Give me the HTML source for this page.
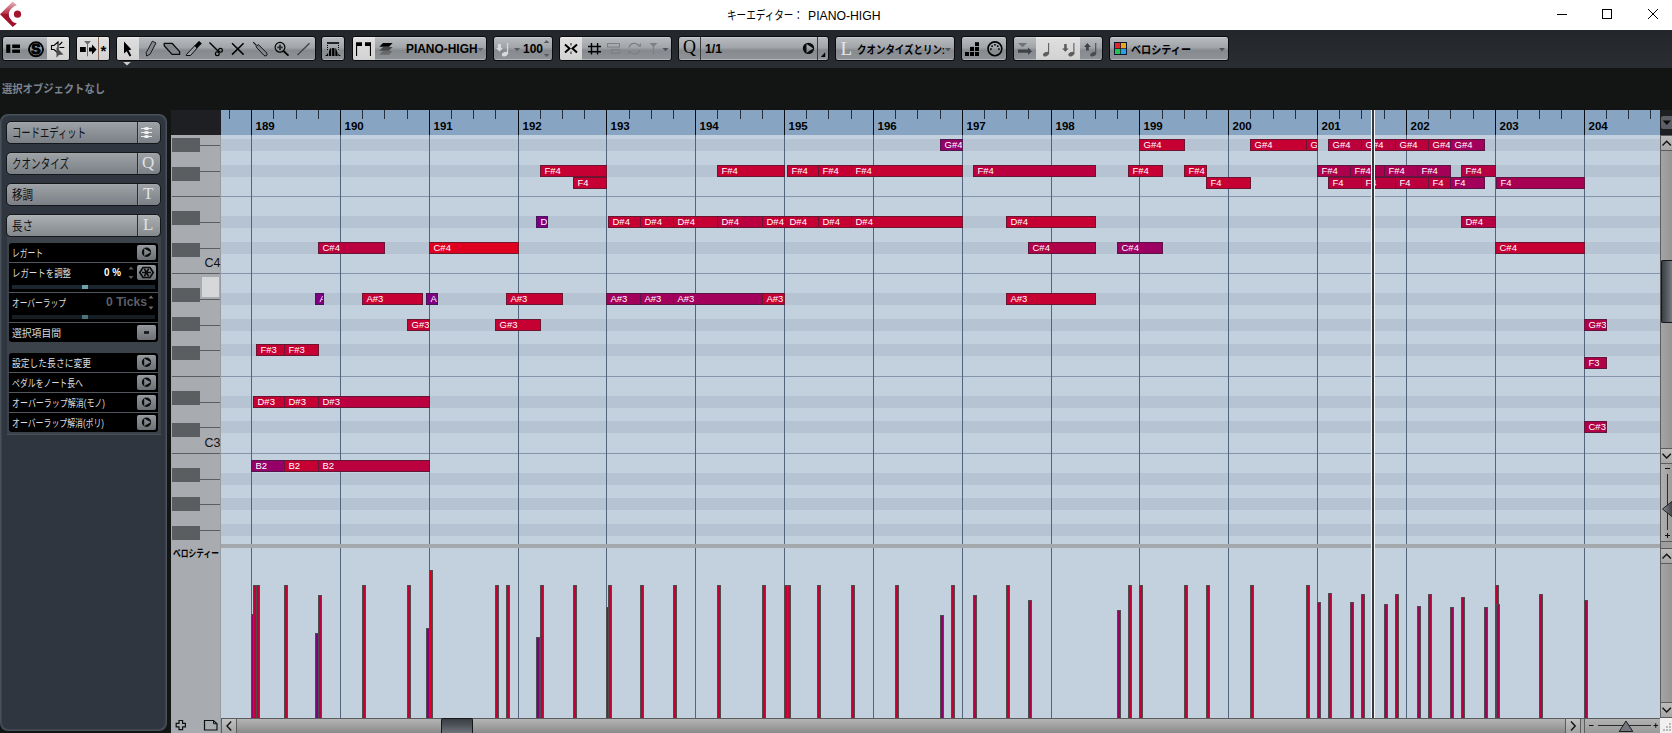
<!DOCTYPE html>
<html lang="ja"><head><meta charset="utf-8"><title>キーエディター： PIANO-HIGH</title>
<style>
html,body{margin:0;padding:0;background:#131514;}
body{width:1672px;height:733px;position:relative;overflow:hidden;-webkit-font-smoothing:antialiased;font-family:"Liberation Sans","Noto Sans CJK JP",sans-serif;font-size:11px;color:#000;}
div{position:absolute;box-sizing:border-box;}
svg{position:absolute;overflow:visible;}
.t{white-space:nowrap;}
.fit{display:inline-block;transform-origin:0 50%;white-space:nowrap;}
.g{border:1px solid #0a0b0c;border-radius:3px;top:36px;height:25px;overflow:hidden;
 background:linear-gradient(to bottom,#c8cbce 0,#c8cbce 1px,#b7babd 1px,#a1a5a9 10.5px,#868a8e 13.5px,#8f9397 22px,#b2b5b8 22px,#b2b5b8 23px);}
.a{top:0;height:23px;background:linear-gradient(to bottom,#f0f0f0 0,#dedede 2px,#d2d2d2 100%);}
.dv{top:0;width:1px;height:23px;background:#3a3d40;}
.n{height:12px;border:1px solid #6e1630;overflow:hidden;color:#fff;font-size:9.5px;line-height:10px;white-space:nowrap;padding:0 0 0 3.5px;}
.v{width:4px;border:1px solid #4c4c4c;border-bottom:none;}
.bl{top:135px;width:1px;height:583px;background:#53657d;}
.hl{left:221px;width:1439px;height:1px;background:#8596aa;}
.pb{left:6px;width:155px;height:23px;border:1px solid #15181b;border-radius:5px;overflow:hidden;
 background:linear-gradient(to bottom,#a6aaad 0,#9da1a5 1px,#7a8086 100%);}
.pb .d{left:130px;top:0;width:1px;height:21px;background:#2a2e32;}
.pb .d2{left:131px;top:0;width:1px;height:21px;background:#a0a4a8;opacity:.5;}
.pt{left:4.5px;top:0;height:21px;line-height:21px;font-size:13px;color:#101214;}
.row{left:0;width:149px;height:20px;border-top:1px solid #50565c;}
.rt{left:3px;top:1px;height:19px;line-height:19px;font-size:10.5px;color:#dcdcdc;}
.sb{left:128px;top:2px;width:19px;height:15px;border-radius:2px;background:linear-gradient(to bottom,#a0a4a7 0,#92969a 1px,#6c7074 100%);}
.bk{left:172px;width:28px;height:14px;background:#5a5e61;}
.kl{left:200px;width:21px;height:1px;background:#5b5e60;}
.kf{left:172px;width:49px;height:1px;background:#5b5e60;}
</style></head><body>

<div style="left:0px;top:0px;width:1672px;height:30px;background:#fff;"></div>
<svg style="left:0;top:0" width="24" height="30" viewBox="0 0 24 30">
<defs><linearGradient id="lg" x1="0" y1="0" x2="0" y2="1"><stop offset="0" stop-color="#eab8c0"/><stop offset=".48" stop-color="#b42c46"/><stop offset=".5" stop-color="#a4142c"/><stop offset="1" stop-color="#9e1028"/></linearGradient></defs>
<path d="M0 14.300L12.700 1.600L16.800 5.300L14.200 6.300Q8.600 10 8.800 14.500Q8.800 18.400 13.800 22.600L16.800 23.500L12.700 27Z" fill="url(#lg)"/>
<circle cx="17.500" cy="14.200" r="3.600" fill="#a4142c"/></svg>
<div class="t" style="left:727px;top:7px;height:18px;line-height:18px;font-size:12.5px;color:#000;"><span class="fit" id="ti1" style="transform:scaleX(0.7666)">キーエディター：</span></div>
<div class="t" style="left:808px;top:7px;height:18px;line-height:18px;font-size:12.5px;color:#000;"><span class="fit" id="ti2" style="transform:scaleX(0.9756)">PIANO-HIGH</span></div>
<svg style="left:1550px;top:0" width="122" height="30" viewBox="0 0 122 30" fill="none" stroke="#000" stroke-width="1">
<path d="M7 14.5h10"/><rect x="52.5" y="9.5" width="9" height="9"/><path d="M98 9l10 10M108 9l-10 10"/></svg>
<div style="left:0px;top:30px;width:1672px;height:38px;background:linear-gradient(to bottom,#23272b,#2a2d32);"></div>
<div style="left:0px;top:68px;width:1672px;height:42px;background:#131514;"></div>
<div class="g" style="left:2px;width:68px"><div class="a" style="left:44px;width:22px"></div><svg style="left:0px;top:0px" width="66" height="23" viewBox="0 0 66 23" >
<rect x="3.2" y="7.5" width="4.1" height="8.4" fill="#000"/><rect x="9.2" y="7.5" width="7.8" height="3.6" fill="#000"/><rect x="9.2" y="12.6" width="7.8" height="3.3" fill="#000"/>
<circle cx="33" cy="12.300" r="7" fill="none" stroke="#000" stroke-width="1.900"/>
<text x="33" y="17.300" text-anchor="middle" font-family="Liberation Sans,sans-serif" font-weight="bold" font-size="14" fill="#000" stroke="#000" stroke-width="1.1">S</text>
<path d="M48.500 8.500h2.500l4-3.500v11l-4-3.500h-2.500z" fill="none" stroke="#000" stroke-width="1.100"/>
<path d="M56.300 8l3-3.200M56.500 10.500h4.800" stroke="#000" stroke-width="1.100" fill="none"/>
<path d="M53.500 10.500v10.300l2.300-2.800 4.700-.5z" fill="#4c4c4c"/>
</svg></div>
<div class="g" style="left:76px;width:34px"><div class="a" style="left:0px;width:32px"></div><div class="dv" style="left:21px;background:#8a6a5c"></div><svg style="left:0px;top:0px" width="32" height="23" viewBox="0 0 32 23" >
<path d="M7 4h7l-3 3.200v12h-1v-12z" fill="#6c6c6c"/>
<rect x="3" y="10" width="5.8" height="5" fill="#000"/><path d="M12 10.6h3v-3l4.6 5-4.6 5v-3h-3z" fill="#000"/>
<text x="26.500" y="19" text-anchor="middle" font-family="Liberation Sans,sans-serif" font-weight="bold" font-size="15" fill="#000">*</text>
</svg></div>
<div class="g" style="left:116px;width:200px"><div class="a" style="left:0px;width:22px"></div><svg style="left:0px;top:0px" width="198" height="23" viewBox="0 0 198 23" >
<path d="M7 4.500L7 16.500L9.700 14.200L12.600 19.400L14.300 18.500L11.600 13.300L14.400 12.600Z" fill="#000"/>
<path d="M35.400 4.200L39 6L33 17.300L29.600 19L29.200 15.600Z" fill="#84888c" stroke="#1a1a1a" stroke-width="1" stroke-linejoin="round"/>
<path d="M47.200 6.300L55.100 6.300L62.600 14.600L62.600 17.400L55.100 17.400L47.200 8.800Z" fill="#84888c" stroke="#0c0c0c" stroke-width="1.300" stroke-linejoin="round"/>
<path d="M77.800 8.600L69.200 17.800L69.200 18.500L73.500 18.500L80.200 11Z" fill="#9a9ea2" stroke="#0c0c0c" stroke-width="1" stroke-linejoin="round"/><path d="M82 4.200L84.500 6.600L80.200 11L77.800 8.600Z" fill="#000" stroke="#000" stroke-width=".6"/>
<path d="M92.500 5.500l9.500 9.500" stroke="#000" stroke-width="1.400" fill="none"/><circle cx="103.500" cy="13.300" r="1.900" fill="none" stroke="#000" stroke-width="1.200"/><circle cx="100.300" cy="16.800" r="1.900" fill="none" stroke="#000" stroke-width="1.200"/>
<path d="M115 6.200l11.600 11.400M126.600 6.200l-11.600 11.400" stroke="#000" stroke-width="1.500" fill="none"/>
<path d="M136.200 5.200l3.300 3.300" stroke="#111" stroke-width="1.100"/><path d="M139 9.800l2.300-2.300 8.400 8.400q1 2.400-.4 2.900q-1.500.4-2.500-.6z" fill="#84888c" stroke="#111" stroke-width="1" stroke-linejoin="round"/>
<circle cx="163" cy="10.300" r="4.900" fill="none" stroke="#000" stroke-width="1.200"/><path d="M166.500 14l5 4.600" stroke="#000" stroke-width="1.800"/><path d="M160.300 10.300h5.400M163 7.600v5.400" stroke="#2c2c2c" stroke-width="1.800"/>
<path d="M180.500 18l12-11.700" stroke="#404040" stroke-width="1.200"/>
</svg></div>
<svg style="left:122px;top:62px" width="10" height="4" viewBox="0 0 10 4" ><path d="M1.2 0h7.6l-3.8 3.6z" fill="#c9ccd0"/></svg>
<div class="g" style="left:321px;width:24px"><svg style="left:0px;top:0px" width="22" height="23" viewBox="0 0 22 23" >
<rect x="5" y="5.200" width="12.100" height="1.600" fill="#000"/>
<g fill="#000"><rect x="5" y="8" width="1" height="1"/><rect x="5" y="10" width="1" height="1"/><rect x="5" y="12" width="1" height="1"/><rect x="16" y="8" width="1" height="1"/><rect x="16" y="10" width="1" height="1"/><rect x="16" y="12" width="1" height="1"/></g>
<path d="M3 18.900Q6.500 17 8 11.600Q9.500 10.900 11 10.900Q12.500 10.900 14 11.600Q15.500 17 18.900 18.900Z" fill="#000"/>
<path d="M6.500 11v8M9.600 11v8M12.900 11v8M16 11v8" stroke="#979b9f" stroke-width=".8"/>
</svg></div>
<div class="g" style="left:352px;width:135px"><div class="a" style="left:0px;width:22px"></div><svg style="left:0px;top:0px" width="133" height="23" viewBox="0 0 133 23" >
<path d="M3 18.900v-13.700h6v3.700h-4.900v10zM12 5.200h6v13.700h-1.100v-10h-4.900z" fill="#000"/>
<path d="M30 6h9.600l-3.600 3.700h-9.600z" fill="#000"/><path d="M30 10.100h9.600l-3.600 3.600h-9.600z" fill="#474747"/><path d="M30 14.100h9.600l-3.600 3.600h-9.600z" fill="#686868"/>
<path d="M124.5 11h6l-3 3.2z" fill="#63676b"/>
</svg><div class="t" style="left:52.5px;top:1px;height:23px;line-height:23px;font-size:12px;font-weight:bold;color:#000"><span class="fit" id="tb1" style="transform:scaleX(0.9931)">PIANO-HIGH</span></div></div>
<div class="g" style="left:493px;width:60px"><svg style="left:0px;top:0px" width="58" height="23" viewBox="0 0 58 23" >
<path d="M4 7h3v4h2l-3.500 3.600-3.500-3.600h2z" fill="#d8dadc"/>
<path d="M13.550 6v11" stroke="#d8dadc" stroke-width="1.200"/><ellipse cx="10.800" cy="17.200" rx="3" ry="2.100" transform="rotate(-25 10.800 17.200)" fill="#d8dadc"/>
<path d="M20 11h6.200l-3.100 3.200z" fill="#585c60"/>
<path d="M49.800 6h5.600l-2.800-3zM49.800 17.100h5.600l-2.800 3z" fill="#585c60"/>
</svg><div class="t" style="left:29px;top:1px;height:23px;line-height:23px;font-size:12px;font-weight:bold;color:#000"><span class="fit" id="tb2" style="transform:scaleX(0.9984)">100</span></div></div>
<div class="g" style="left:559px;width:113px"><div class="a" style="left:0px;width:22px"></div><svg style="left:0px;top:0px" width="111" height="23" viewBox="0 0 111 23" >
<path d="M5 7.500l4.500 4-4.500 4M17 7.500l-4.500 4 4.500 4" fill="none" stroke="#000" stroke-width="2"/><path d="M11 6v2.500M11 14.500v2.500" stroke="#606060" stroke-width="1.600"/>
<path d="M31.500 6v11.500M37.600 6v11.500M28 9.500h13M28 14.700h13" stroke="#000" stroke-width="1.400" fill="none"/>
<rect x="47.5" y="6.500" width="12" height="3.600" fill="none" stroke="#7d8185" stroke-width="1"/><rect x="51.500" y="12.500" width="8" height="4" fill="none" stroke="#7d8185" stroke-width="1"/>
<path d="M69 10.500a5.5 5.500 0 0 1 10-1.500M80 13a5.500 5.500 0 0 1-10 1.500" fill="none" stroke="#7d8185" stroke-width="1.300"/><path d="M77.500 9.500h3.500v-3.500zM71.500 14h-3.500v3.500z" fill="#7d8185"/>
<path d="M89.500 6h8l-3.400 3.400v8h-1.200v-8z" fill="#7d8185"/>
<path d="M102.500 11h6l-3 3.200z" fill="#50545a"/>
</svg></div>
<div class="g" style="left:678px;width:151px"><div class="dv" style="left:21px"></div><div class="dv" style="left:138px"></div><div class="t" style="left:4px;top:-1px;height:23px;line-height:23px;font-size:18px;font-family:'Liberation Serif',serif;color:#000">Q</div><div class="t" style="left:25.5px;top:1px;height:23px;line-height:23px;font-size:12px;font-weight:bold;color:#000"><span class="fit" id="tb3" style="transform:scaleX(1.0187)">1/1</span></div><svg style="left:0px;top:0px" width="149" height="23" viewBox="0 0 149 23" >
<path fill-rule="evenodd" d="M123.80 11.35a5.7 5.7 0 1 0 11.40 0a5.7 5.7 0 1 0 -11.40 0zM127.5 7L127.5 15.8L134.3 11.4z" fill="#0c0c0c"/>
<path d="M146.200 15.300v4.700h-4.400z" fill="#000"/>
</svg></div>
<div class="g" style="left:835px;width:120px"><div class="t" style="left:4.5px;top:0;height:23px;line-height:23px;font-size:19px;font-family:'Liberation Serif',serif;color:#e4e6e8">L</div><div class="t" style="left:21px;top:2px;height:23px;line-height:22px;font-size:11.500px;font-weight:bold;color:#000"><span class="fit" id="tb4" style="transform:scaleX(0.8226)">クオンタイズとリン:</span></div><svg style="left:0px;top:0px" width="118" height="23" viewBox="0 0 118 23" ><path d="M109 11h6l-3 3.200z" fill="#50545a"/></svg></div>
<div class="g" style="left:961px;width:46px"><svg style="left:0px;top:0px" width="44" height="23" viewBox="0 0 44 23" >
<g fill="#000"><rect x="3" y="15" width="4" height="4"/><rect x="8" y="15" width="4" height="4"/><rect x="13" y="15" width="4" height="4"/><rect x="8" y="9.900" width="4" height="4.100"/><rect x="13" y="9.900" width="4" height="4.100"/><rect x="13" y="5.200" width="4" height="3.800"/></g>
<circle cx="32.900" cy="11.800" r="6.900" fill="none" stroke="#000" stroke-width="1.600"/>
<g fill="#000"><rect x="28.100" y="11.300" width="1.600" height="1.600"/><rect x="29.300" y="8.300" width="1.600" height="1.600"/><rect x="32.100" y="7" width="1.600" height="1.600"/><rect x="34.900" y="8.300" width="1.600" height="1.600"/><rect x="36.100" y="11.300" width="1.600" height="1.600"/></g>
</svg></div>
<div class="g" style="left:1013px;width:90px"><div class="a" style="left:22px;width:44px"></div><svg style="left:0px;top:0px" width="88" height="23" viewBox="0 0 88 23" >
<path d="M4 6h9l-4.500 4.300z" fill="#6f7377"/><path d="M4 12.400h10v-2l4 3.800-4 3.800v-2.200h-10z" fill="#3f4246"/>
<path d="M34.600 6v11" stroke="#5e5e5e" stroke-width="1.100"/><ellipse cx="32" cy="17.100" rx="3.100" ry="2" transform="rotate(-25 32 17.100)" fill="#5e5e5e"/>
<path d="M50.200 7h2.500v4.400h2l-3.300 3.300-3.400-3.300h2.200z" fill="#5a5a5a"/><path d="M59.900 6v11" stroke="#5e5e5e" stroke-width="1.100"/><ellipse cx="57.300" cy="17.100" rx="3.100" ry="2" transform="rotate(-25 57.300 17.100)" fill="#5e5e5e"/>
<path d="M72 13.600h2.800v-3.600h2l-3.400-4-3.400 4h2z" fill="#3f4246"/><path d="M81.700 6v11" stroke="#4a4c50" stroke-width="1.100"/><ellipse cx="79.100" cy="17.200" rx="3.100" ry="2" transform="rotate(-25 79.100 17.200)" fill="#4a4c50"/>
</svg></div>
<div class="g" style="left:1109px;width:120px"><svg style="left:0px;top:0px" width="118" height="23" viewBox="0 0 118 23" >
<rect x="4" y="5" width="13" height="13" fill="#0c1830"/>
<rect x="5" y="6" width="5.300" height="5.300" fill="#e02828"/><rect x="11" y="6" width="5" height="5.300" fill="#e8a820"/>
<rect x="5" y="12" width="5.300" height="5" fill="#28c050"/><rect x="11" y="12" width="5" height="5" fill="#28a0e8"/>
<path d="M109 11h6l-3 3.200z" fill="#50545a"/>
</svg><div class="t" style="left:21px;top:2px;height:23px;line-height:22px;font-size:11.500px;font-weight:bold;color:#000"><span class="fit" id="tb5" style="transform:scaleX(0.8783)">ベロシティー</span></div></div>
<div class="t" style="left:2px;top:80px;height:18px;line-height:18px;font-size:11.5px;font-weight:bold;color:#7b838f;"><span class="fit" id="info" style="transform:scaleX(0.8957)">選択オブジェクトなし</span></div>
<div style="left:0px;top:114px;width:167px;height:617px;border:2px solid #48505a;border-radius:8px;background:#2f3640;"></div>
<div style="left:1px;top:115px;width:165px;height:615px;border:1px solid #3b434d;border-radius:7px;"></div>
<div class="pb" style="top:121px;"><div class="pt t"><span class="fit" id="pb1" style="transform:scaleX(0.7178)">コードエディット</span></div><div class="d"></div><div class="d2"></div><svg style="left:130px;top:0px" width="22" height="21" viewBox="0 0 22 21" ><path d="M4 6.500h11M4 10.500h11M4 14.500h11" stroke="#e8e8e8" stroke-width="1"/>
<ellipse cx="9.500" cy="6.500" rx="2.600" ry="1.600" fill="#f4f4f4"/><ellipse cx="9.500" cy="10.500" rx="2.600" ry="1.600" fill="#f4f4f4"/><ellipse cx="9.500" cy="14.500" rx="2.600" ry="1.600" fill="#f4f4f4"/></svg></div>
<div class="pb" style="top:152px;"><div class="pt t"><span class="fit" id="pb2" style="transform:scaleX(0.7343)">クオンタイズ</span></div><div class="d"></div><div class="d2"></div><div class="t" style="left:135px;top:-1px;height:21px;line-height:21px;font-size:17px;font-family:'Liberation Serif',serif;color:#dfe1e3">Q</div></div>
<div class="pb" style="top:183px;"><div class="pt t"><span class="fit" id="pb3" style="transform:scaleX(0.8072)">移調</span></div><div class="d"></div><div class="d2"></div><div class="t" style="left:136px;top:-1px;height:21px;line-height:21px;font-size:17px;font-family:'Liberation Serif',serif;color:#dfe1e3">T</div></div>
<div class="pb" style="top:214px;background:linear-gradient(to bottom,#b4b8bb 0,#aaaeb1 1px,#84898e 100%);"><div class="pt t"><span class="fit" id="pb4" style="transform:scaleX(0.8072)">長さ</span></div><div class="d"></div><div class="d2"></div><div class="t" style="left:136px;top:-1px;height:21px;line-height:21px;font-size:17px;font-family:'Liberation Serif',serif;color:#dfe1e3">L</div></div>
<div style="left:7px;top:237px;width:154px;height:198px;background:#3c4249;border-bottom:1px solid #4a5057;"></div>
<div style="left:9px;top:243px;width:149px;height:99px;background:#000;border-radius:3px;overflow:hidden;"><div class="row" style="top:0px;height:20px;border-top:none;"><div class="rt t"><span class="fit" id="r1" style="transform:scaleX(0.7381)">レガート</span></div><div class="sb" style="top:2px"><svg style="left:0px;top:0px" width="19" height="15" viewBox="0 0 19 15" ><path fill-rule="evenodd" d="M4.80 7.30a4.7 4.7 0 1 0 9.40 0a4.7 4.7 0 1 0 -9.40 0zM7.2 3.6L7.2 11L13.9 7.3z" fill="#0c0c0c"/></svg></div></div><div class="row" style="top:19px;height:30px;"><div class="rt t"><span class="fit" id="r2" style="transform:scaleX(0.8027)">レガートを調整</span></div><div class="t" style="left:95px;top:0;height:19px;line-height:19px;font-size:10.500px;font-weight:bold;color:#fff"><span class="fit" id="r2v" style="transform:scaleX(0.9396)">0 %</span></div><svg style="left:118px;top:2px" width="8" height="16" viewBox="0 0 8 16" ><path d="M1.500 4.500h5l-2.500-3zM1.500 11h5l-2.500 3z" fill="#5c5c5c"/></svg><div class="sb" style="top:2px"><svg style="left:0px;top:0px" width="19" height="15" viewBox="0 0 19 15" ><path d="M6 2.500h7l3.200 5-3.200 5h-7l-3.200-5z" fill="none" stroke="#0c0c0c" stroke-width="1.700"/><path d="M5 7.500h9M7.300 3.600l4.400 7.800M11.700 3.600l-4.400 7.800" stroke="#0c0c0c" stroke-width="1.700"/></svg></div><div style="left:3px;top:22px;width:143px;height:4px;background:#1b262e"></div><div style="left:73px;top:22px;width:6px;height:4px;background:#6ea2ac"></div></div><div class="row" style="top:49px;height:30px;"><div class="rt t"><span class="fit" id="r3" style="transform:scaleX(0.7356)">オーバーラップ</span></div><div class="t" style="left:97px;top:0;height:19px;line-height:18px;font-size:12px;font-weight:bold;color:#5b5f67"><span class="fit" id="r3v" style="transform:scaleX(1.0127)">0 Ticks</span></div><svg style="left:138px;top:1px" width="8" height="18" viewBox="0 0 8 18" ><path d="M1.500 4.500h5l-2.500-3zM1.500 12.500h5l-2.500 3z" fill="#6a6a6a"/></svg><div style="left:3px;top:22px;width:143px;height:4px;background:#161e24"></div><div style="left:73px;top:22px;width:6px;height:4px;background:#4d7178"></div></div><div class="row" style="top:79px;height:20px;"><div class="rt t"><span class="fit" id="r4" style="transform:scaleX(0.9333)">選択項目間</span></div><div class="sb" style="top:2px"><svg style="left:0px;top:0px" width="19" height="15" viewBox="0 0 19 15" ><rect x="7" y="6.200" width="5" height="2.600" fill="#141414"/></svg></div></div></div>
<div style="left:9px;top:353px;width:149px;height:79px;background:#000;border-radius:3px;overflow:hidden;"><div class="row" style="top:0px;height:20px;border-top:none;"><div class="rt t"><span class="fit" id="r5" style="transform:scaleX(0.8360)">設定した長さに変更</span></div><div class="sb" style="top:2px"><svg style="left:0px;top:0px" width="19" height="15" viewBox="0 0 19 15" ><path fill-rule="evenodd" d="M4.80 7.30a4.7 4.7 0 1 0 9.40 0a4.7 4.7 0 1 0 -9.40 0zM7.2 3.6L7.2 11L13.9 7.3z" fill="#0c0c0c"/></svg></div></div><div class="row" style="top:19px;height:20px;"><div class="rt t"><span class="fit" id="r6" style="transform:scaleX(0.7513)">ペダルをノート長へ</span></div><div class="sb" style="top:2px"><svg style="left:0px;top:0px" width="19" height="15" viewBox="0 0 19 15" ><path fill-rule="evenodd" d="M4.80 7.30a4.7 4.7 0 1 0 9.40 0a4.7 4.7 0 1 0 -9.40 0zM7.2 3.6L7.2 11L13.9 7.3z" fill="#0c0c0c"/></svg></div></div><div class="row" style="top:39px;height:20px;"><div class="rt t"><span class="fit" id="r7" style="transform:scaleX(0.7599)">オーバーラップ解消(モノ)</span></div><div class="sb" style="top:2px"><svg style="left:0px;top:0px" width="19" height="15" viewBox="0 0 19 15" ><path fill-rule="evenodd" d="M4.80 7.30a4.7 4.7 0 1 0 9.40 0a4.7 4.7 0 1 0 -9.40 0zM7.2 3.6L7.2 11L13.9 7.3z" fill="#0c0c0c"/></svg></div></div><div class="row" style="top:59px;height:20px;"><div class="rt t"><span class="fit" id="r8" style="transform:scaleX(0.7517)">オーバーラップ解消(ポリ)</span></div><div class="sb" style="top:2px"><svg style="left:0px;top:0px" width="19" height="15" viewBox="0 0 19 15" ><path fill-rule="evenodd" d="M4.80 7.30a4.7 4.7 0 1 0 9.40 0a4.7 4.7 0 1 0 -9.40 0zM7.2 3.6L7.2 11L13.9 7.3z" fill="#0c0c0c"/></svg></div></div></div>
<div style="left:171px;top:110px;width:50px;height:25px;background:#1e1f22;"></div>
<div style="left:1660px;top:110px;width:12px;height:25px;background:#1e1f22;"></div>
<div style="left:221px;top:110px;width:1439px;height:25px;background:#87a5c3;"></div>
<div style="left:221px;top:110px;width:1439px;height:25px;overflow:hidden;"><div style="left:30px;top:0;width:1px;height:25px;background:#0a0e12"></div><div class="t" style="left:34.5px;top:10px;height:13px;line-height:13px;font-size:11.500px;font-weight:bold;color:#000">189</div><div style="left:52px;top:0;width:1px;height:9px;background:#26303c"></div><div style="left:75px;top:0;width:1px;height:9px;background:#26303c"></div><div style="left:97px;top:0;width:1px;height:9px;background:#26303c"></div><div style="left:119px;top:0;width:1px;height:25px;background:#0a0e12"></div><div class="t" style="left:123.5px;top:10px;height:13px;line-height:13px;font-size:11.500px;font-weight:bold;color:#000">190</div><div style="left:141px;top:0;width:1px;height:9px;background:#26303c"></div><div style="left:163px;top:0;width:1px;height:9px;background:#26303c"></div><div style="left:186px;top:0;width:1px;height:9px;background:#26303c"></div><div style="left:208px;top:0;width:1px;height:25px;background:#0a0e12"></div><div class="t" style="left:212.5px;top:10px;height:13px;line-height:13px;font-size:11.500px;font-weight:bold;color:#000">191</div><div style="left:230px;top:0;width:1px;height:9px;background:#26303c"></div><div style="left:252px;top:0;width:1px;height:9px;background:#26303c"></div><div style="left:274px;top:0;width:1px;height:9px;background:#26303c"></div><div style="left:297px;top:0;width:1px;height:25px;background:#0a0e12"></div><div class="t" style="left:301.5px;top:10px;height:13px;line-height:13px;font-size:11.500px;font-weight:bold;color:#000">192</div><div style="left:319px;top:0;width:1px;height:9px;background:#26303c"></div><div style="left:341px;top:0;width:1px;height:9px;background:#26303c"></div><div style="left:363px;top:0;width:1px;height:9px;background:#26303c"></div><div style="left:385px;top:0;width:1px;height:25px;background:#0a0e12"></div><div class="t" style="left:389.5px;top:10px;height:13px;line-height:13px;font-size:11.500px;font-weight:bold;color:#000">193</div><div style="left:408px;top:0;width:1px;height:9px;background:#26303c"></div><div style="left:430px;top:0;width:1px;height:9px;background:#26303c"></div><div style="left:452px;top:0;width:1px;height:9px;background:#26303c"></div><div style="left:474px;top:0;width:1px;height:25px;background:#0a0e12"></div><div class="t" style="left:478.5px;top:10px;height:13px;line-height:13px;font-size:11.500px;font-weight:bold;color:#000">194</div><div style="left:496px;top:0;width:1px;height:9px;background:#26303c"></div><div style="left:519px;top:0;width:1px;height:9px;background:#26303c"></div><div style="left:541px;top:0;width:1px;height:9px;background:#26303c"></div><div style="left:563px;top:0;width:1px;height:25px;background:#0a0e12"></div><div class="t" style="left:567.5px;top:10px;height:13px;line-height:13px;font-size:11.500px;font-weight:bold;color:#000">195</div><div style="left:585px;top:0;width:1px;height:9px;background:#26303c"></div><div style="left:607px;top:0;width:1px;height:9px;background:#26303c"></div><div style="left:630px;top:0;width:1px;height:9px;background:#26303c"></div><div style="left:652px;top:0;width:1px;height:25px;background:#0a0e12"></div><div class="t" style="left:656.5px;top:10px;height:13px;line-height:13px;font-size:11.500px;font-weight:bold;color:#000">196</div><div style="left:674px;top:0;width:1px;height:9px;background:#26303c"></div><div style="left:696px;top:0;width:1px;height:9px;background:#26303c"></div><div style="left:719px;top:0;width:1px;height:9px;background:#26303c"></div><div style="left:741px;top:0;width:1px;height:25px;background:#0a0e12"></div><div class="t" style="left:745.5px;top:10px;height:13px;line-height:13px;font-size:11.500px;font-weight:bold;color:#000">197</div><div style="left:763px;top:0;width:1px;height:9px;background:#26303c"></div><div style="left:785px;top:0;width:1px;height:9px;background:#26303c"></div><div style="left:807px;top:0;width:1px;height:9px;background:#26303c"></div><div style="left:830px;top:0;width:1px;height:25px;background:#0a0e12"></div><div class="t" style="left:834.5px;top:10px;height:13px;line-height:13px;font-size:11.500px;font-weight:bold;color:#000">198</div><div style="left:852px;top:0;width:1px;height:9px;background:#26303c"></div><div style="left:874px;top:0;width:1px;height:9px;background:#26303c"></div><div style="left:896px;top:0;width:1px;height:9px;background:#26303c"></div><div style="left:918px;top:0;width:1px;height:25px;background:#0a0e12"></div><div class="t" style="left:922.5px;top:10px;height:13px;line-height:13px;font-size:11.500px;font-weight:bold;color:#000">199</div><div style="left:941px;top:0;width:1px;height:9px;background:#26303c"></div><div style="left:963px;top:0;width:1px;height:9px;background:#26303c"></div><div style="left:985px;top:0;width:1px;height:9px;background:#26303c"></div><div style="left:1007px;top:0;width:1px;height:25px;background:#0a0e12"></div><div class="t" style="left:1011.5px;top:10px;height:13px;line-height:13px;font-size:11.500px;font-weight:bold;color:#000">200</div><div style="left:1029px;top:0;width:1px;height:9px;background:#26303c"></div><div style="left:1052px;top:0;width:1px;height:9px;background:#26303c"></div><div style="left:1074px;top:0;width:1px;height:9px;background:#26303c"></div><div style="left:1096px;top:0;width:1px;height:25px;background:#0a0e12"></div><div class="t" style="left:1100.5px;top:10px;height:13px;line-height:13px;font-size:11.500px;font-weight:bold;color:#000">201</div><div style="left:1118px;top:0;width:1px;height:9px;background:#26303c"></div><div style="left:1140px;top:0;width:1px;height:9px;background:#26303c"></div><div style="left:1163px;top:0;width:1px;height:9px;background:#26303c"></div><div style="left:1185px;top:0;width:1px;height:25px;background:#0a0e12"></div><div class="t" style="left:1189.5px;top:10px;height:13px;line-height:13px;font-size:11.500px;font-weight:bold;color:#000">202</div><div style="left:1207px;top:0;width:1px;height:9px;background:#26303c"></div><div style="left:1229px;top:0;width:1px;height:9px;background:#26303c"></div><div style="left:1252px;top:0;width:1px;height:9px;background:#26303c"></div><div style="left:1274px;top:0;width:1px;height:25px;background:#0a0e12"></div><div class="t" style="left:1278.5px;top:10px;height:13px;line-height:13px;font-size:11.500px;font-weight:bold;color:#000">203</div><div style="left:1296px;top:0;width:1px;height:9px;background:#26303c"></div><div style="left:1318px;top:0;width:1px;height:9px;background:#26303c"></div><div style="left:1340px;top:0;width:1px;height:9px;background:#26303c"></div><div style="left:1363px;top:0;width:1px;height:25px;background:#0a0e12"></div><div class="t" style="left:1367.5px;top:10px;height:13px;line-height:13px;font-size:11.500px;font-weight:bold;color:#000">204</div><div style="left:1385px;top:0;width:1px;height:9px;background:#26303c"></div><div style="left:1407px;top:0;width:1px;height:9px;background:#26303c"></div><div style="left:1429px;top:0;width:1px;height:9px;background:#26303c"></div><div style="left:8px;top:0;width:1px;height:9px;background:#26303c"></div></div>
<div style="left:221px;top:135px;width:1439px;height:409px;background:#c3d0de;"></div>
<div style="left:221px;top:139px;width:1439px;height:12px;background:#b5c3d2;"></div>
<div style="left:221px;top:165px;width:1439px;height:12px;background:#b5c3d2;"></div>
<div style="left:221px;top:216px;width:1439px;height:12px;background:#b5c3d2;"></div>
<div style="left:221px;top:242px;width:1439px;height:12px;background:#b5c3d2;"></div>
<div style="left:221px;top:293px;width:1439px;height:12px;background:#b5c3d2;"></div>
<div style="left:221px;top:319px;width:1439px;height:12px;background:#b5c3d2;"></div>
<div style="left:221px;top:344px;width:1439px;height:12px;background:#b5c3d2;"></div>
<div style="left:221px;top:396px;width:1439px;height:12px;background:#b5c3d2;"></div>
<div style="left:221px;top:421px;width:1439px;height:12px;background:#b5c3d2;"></div>
<div style="left:221px;top:473px;width:1439px;height:12px;background:#b5c3d2;"></div>
<div style="left:221px;top:498px;width:1439px;height:12px;background:#b5c3d2;"></div>
<div style="left:221px;top:524px;width:1439px;height:12px;background:#b5c3d2;"></div>
<div class="hl" style="top:196px"></div>
<div class="hl" style="top:273px"></div>
<div class="hl" style="top:376px"></div>
<div class="hl" style="top:453px"></div>
<div style="left:221px;top:544px;width:1439px;height:4px;background:#a4a8ad;"></div>
<div style="left:221px;top:548px;width:1439px;height:170px;background:#c3d0de;"></div>
<div style="left:171px;top:135px;width:50px;height:409px;background:#a8abaf;"></div>
<div style="left:171px;top:544px;width:50px;height:189px;background:#a8abaf;"></div>
<div class="bk" style="top:138px"></div>
<div class="kl" style="top:145px"></div>
<div class="bk" style="top:167px"></div>
<div class="kl" style="top:171px"></div>
<div class="bk" style="top:211px"></div>
<div class="kl" style="top:222px"></div>
<div class="bk" style="top:243px"></div>
<div class="kl" style="top:248px"></div>
<div class="bk" style="top:288px"></div>
<div class="kl" style="top:299px"></div>
<div class="bk" style="top:317px"></div>
<div class="kl" style="top:325px"></div>
<div class="bk" style="top:346px"></div>
<div class="kl" style="top:350px"></div>
<div class="bk" style="top:391px"></div>
<div class="kl" style="top:402px"></div>
<div class="bk" style="top:423px"></div>
<div class="kl" style="top:427px"></div>
<div class="bk" style="top:468px"></div>
<div class="kl" style="top:479px"></div>
<div class="bk" style="top:497px"></div>
<div class="kl" style="top:504px"></div>
<div class="bk" style="top:526px"></div>
<div class="kl" style="top:530px"></div>
<div class="kf" style="top:196px"></div>
<div class="kf" style="top:273px"></div>
<div class="kf" style="top:376px"></div>
<div class="kf" style="top:453px"></div>
<div style="left:220px;top:135px;width:1px;height:598px;background:#999ca0;"></div>
<div style="left:202px;top:277px;width:17px;height:20px;background:#d5d7d9;"></div>
<div class="t" style="left:204.5px;top:257px;height:13px;line-height:13px;font-size:12.500px;color:#111;">C4</div>
<div class="t" style="left:204.5px;top:437px;height:13px;line-height:13px;font-size:12.500px;color:#111;">C3</div>
<div class="t" style="left:173px;top:548px;height:12px;line-height:12px;font-size:10px;font-weight:bold;color:#000;"><span class="fit" id="vel" style="transform:scaleX(0.7743)">ベロシティー</span></div>
<div class="bl" style="left:251px"></div>
<div class="bl" style="left:340px"></div>
<div class="bl" style="left:429px"></div>
<div class="bl" style="left:518px"></div>
<div class="bl" style="left:606px"></div>
<div class="bl" style="left:695px"></div>
<div class="bl" style="left:784px"></div>
<div class="bl" style="left:873px"></div>
<div class="bl" style="left:962px"></div>
<div class="bl" style="left:1051px"></div>
<div class="bl" style="left:1139px"></div>
<div class="bl" style="left:1228px"></div>
<div class="bl" style="left:1317px"></div>
<div class="bl" style="left:1406px"></div>
<div class="bl" style="left:1495px"></div>
<div class="bl" style="left:1584px"></div>
<div style="left:221px;top:544px;width:1439px;height:4px;background:#a4a8ad;"></div>
<div class="n" style="left:940px;top:139px;width:23px;background:#94006a;border-color:#52164d">G#4</div>
<div class="n" style="left:1139px;top:139px;width:46px;background:#c70033;border-color:#6b1631">G#4</div>
<div class="n" style="left:1250px;top:139px;width:57px;background:#c70033;border-color:#6b1631">G#4</div>
<div class="n" style="left:1306px;top:139px;width:12px;background:#c70033;border-color:#6b1631">G#4</div>
<div class="n" style="left:1328px;top:139px;width:34px;background:#bc003c;border-color:#661636">G#4</div>
<div class="n" style="left:1361px;top:139px;width:35px;background:#bb003d;border-color:#651636">G#4</div>
<div class="n" style="left:1395px;top:139px;width:34px;background:#bb003d;border-color:#651636">G#4</div>
<div class="n" style="left:1428px;top:139px;width:23px;background:#bb003d;border-color:#651636">G#4</div>
<div class="n" style="left:1450px;top:139px;width:35px;background:#a2005a;border-color:#591645">G#4</div>
<div class="n" style="left:540px;top:165px;width:67px;background:#c70033;border-color:#6b1631">F#4</div>
<div class="n" style="left:717px;top:165px;width:68px;background:#c70033;border-color:#6b1631">F#4</div>
<div class="n" style="left:787px;top:165px;width:32px;background:#c70033;border-color:#6b1631">F#4</div>
<div class="n" style="left:818px;top:165px;width:34px;background:#c70033;border-color:#6b1631">F#4</div>
<div class="n" style="left:851px;top:165px;width:112px;background:#c70033;border-color:#6b1631">F#4</div>
<div class="n" style="left:973px;top:165px;width:123px;background:#ba003e;border-color:#651637">F#4</div>
<div class="n" style="left:1128px;top:165px;width:35px;background:#c70033;border-color:#6b1631">F#4</div>
<div class="n" style="left:1184px;top:165px;width:23px;background:#c70033;border-color:#6b1631">F#4</div>
<div class="n" style="left:1317px;top:165px;width:34px;background:#ac004d;border-color:#5e163e">F#4</div>
<div class="n" style="left:1350px;top:165px;width:35px;background:#ac004d;border-color:#5e163e">F#4</div>
<div class="n" style="left:1384px;top:165px;width:34px;background:#a80052;border-color:#5c1641">F#4</div>
<div class="n" style="left:1417px;top:165px;width:34px;background:#a40058;border-color:#5a1644">F#4</div>
<div class="n" style="left:1461px;top:165px;width:35px;background:#b60042;border-color:#631639">F#4</div>
<div class="n" style="left:573px;top:177px;width:34px;background:#c70033;border-color:#6b1631">F4</div>
<div class="n" style="left:1206px;top:177px;width:45px;background:#c70033;border-color:#6b1631">F4</div>
<div class="n" style="left:1328px;top:177px;width:34px;background:#bc003c;border-color:#661636">F4</div>
<div class="n" style="left:1361px;top:177px;width:35px;background:#bb003d;border-color:#651636">F4</div>
<div class="n" style="left:1395px;top:177px;width:34px;background:#bb003d;border-color:#651636">F4</div>
<div class="n" style="left:1428px;top:177px;width:23px;background:#bb003d;border-color:#651636">F4</div>
<div class="n" style="left:1450px;top:177px;width:35px;background:#a2005a;border-color:#591645">F4</div>
<div class="n" style="left:1496px;top:177px;width:89px;background:#a80052;border-color:#5c1641">F4</div>
<div class="n" style="left:536px;top:216px;width:12px;background:#7e0082;border-color:#471659">D#4</div>
<div class="n" style="left:608px;top:216px;width:33px;background:#c70033;border-color:#6b1631">D#4</div>
<div class="n" style="left:640px;top:216px;width:34px;background:#c70033;border-color:#6b1631">D#4</div>
<div class="n" style="left:673px;top:216px;width:45px;background:#c70033;border-color:#6b1631">D#4</div>
<div class="n" style="left:717px;top:216px;width:46px;background:#ba003e;border-color:#651637">D#4</div>
<div class="n" style="left:762px;top:216px;width:24px;background:#c70033;border-color:#6b1631">D#4</div>
<div class="n" style="left:785px;top:216px;width:34px;background:#c70033;border-color:#6b1631">D#4</div>
<div class="n" style="left:818px;top:216px;width:34px;background:#c70033;border-color:#6b1631">D#4</div>
<div class="n" style="left:851px;top:216px;width:112px;background:#c70033;border-color:#6b1631">D#4</div>
<div class="n" style="left:1006px;top:216px;width:90px;background:#c70033;border-color:#6b1631">D#4</div>
<div class="n" style="left:1461px;top:216px;width:35px;background:#b60042;border-color:#631639">D#4</div>
<div class="n" style="left:318px;top:242px;width:67px;background:#ba003e;border-color:#651637">C#4</div>
<div class="n" style="left:429px;top:242px;width:90px;background:#df001f;border-color:#771627">C#4</div>
<div class="n" style="left:1028px;top:242px;width:68px;background:#b00048;border-color:#60163c">C#4</div>
<div class="n" style="left:1117px;top:242px;width:46px;background:#9c0060;border-color:#561648">C#4</div>
<div class="n" style="left:1495px;top:242px;width:90px;background:#c70033;border-color:#6b1631">C#4</div>
<div class="n" style="left:315px;top:293px;width:9px;background:#7f0081;border-color:#471658">A#3</div>
<div class="n" style="left:362px;top:293px;width:61px;background:#c70033;border-color:#6b1631">A#3</div>
<div class="n" style="left:426px;top:293px;width:12px;background:#80007f;border-color:#481657">A#3</div>
<div class="n" style="left:506px;top:293px;width:57px;background:#c70033;border-color:#6b1631">A#3</div>
<div class="n" style="left:606px;top:293px;width:35px;background:#a2005a;border-color:#591645">A#3</div>
<div class="n" style="left:640px;top:293px;width:34px;background:#a2005a;border-color:#591645">A#3</div>
<div class="n" style="left:673px;top:293px;width:90px;background:#a2005a;border-color:#591645">A#3</div>
<div class="n" style="left:762px;top:293px;width:23px;background:#c70033;border-color:#6b1631">A#3</div>
<div class="n" style="left:1006px;top:293px;width:90px;background:#c70033;border-color:#6b1631">A#3</div>
<div class="n" style="left:407px;top:319px;width:23px;background:#c70033;border-color:#6b1631">G#3</div>
<div class="n" style="left:495px;top:319px;width:46px;background:#c70033;border-color:#6b1631">G#3</div>
<div class="n" style="left:1584px;top:319px;width:23px;background:#b00048;border-color:#60163c">G#3</div>
<div class="n" style="left:256px;top:344px;width:29px;background:#c70033;border-color:#6b1631">F#3</div>
<div class="n" style="left:284px;top:344px;width:35px;background:#c70033;border-color:#6b1631">F#3</div>
<div class="n" style="left:1584px;top:357px;width:23px;background:#b00048;border-color:#60163c">F3</div>
<div class="n" style="left:253px;top:396px;width:32px;background:#c70033;border-color:#6b1631">D#3</div>
<div class="n" style="left:284px;top:396px;width:35px;background:#c70033;border-color:#6b1631">D#3</div>
<div class="n" style="left:318px;top:396px;width:112px;background:#ba003e;border-color:#651637">D#3</div>
<div class="n" style="left:1584px;top:421px;width:23px;background:#b00048;border-color:#60163c">C#3</div>
<div class="n" style="left:251px;top:460px;width:34px;background:#950069;border-color:#52164c">B2</div>
<div class="n" style="left:284px;top:460px;width:35px;background:#c70033;border-color:#6b1631">B2</div>
<div class="n" style="left:318px;top:460px;width:112px;background:#ba003e;border-color:#651637">B2</div>
<div class="v" style="left:251px;top:614px;height:104px;background:#950069"></div>
<div class="v" style="left:253px;top:585px;height:133px;background:#c70033"></div>
<div class="v" style="left:256px;top:585px;height:133px;background:#c70033"></div>
<div class="v" style="left:284px;top:585px;height:133px;background:#c70033"></div>
<div class="v" style="left:315px;top:633px;height:85px;background:#7f0081"></div>
<div class="v" style="left:318px;top:595px;height:123px;background:#ba003e"></div>
<div class="v" style="left:362px;top:585px;height:133px;background:#c70033"></div>
<div class="v" style="left:407px;top:585px;height:133px;background:#c70033"></div>
<div class="v" style="left:426px;top:628px;height:90px;background:#80007f"></div>
<div class="v" style="left:429px;top:570px;height:148px;background:#df001f"></div>
<div class="v" style="left:495px;top:585px;height:133px;background:#c70033"></div>
<div class="v" style="left:506px;top:585px;height:133px;background:#c70033"></div>
<div class="v" style="left:536px;top:637px;height:81px;background:#7e0082"></div>
<div class="v" style="left:540px;top:585px;height:133px;background:#c70033"></div>
<div class="v" style="left:573px;top:585px;height:133px;background:#c70033"></div>
<div class="v" style="left:606px;top:607px;height:111px;background:#a2005a"></div>
<div class="v" style="left:608px;top:585px;height:133px;background:#c70033"></div>
<div class="v" style="left:640px;top:585px;height:133px;background:#c70033"></div>
<div class="v" style="left:673px;top:585px;height:133px;background:#c70033"></div>
<div class="v" style="left:717px;top:585px;height:133px;background:#c70033"></div>
<div class="v" style="left:762px;top:585px;height:133px;background:#c70033"></div>
<div class="v" style="left:784px;top:585px;height:133px;background:#c70033"></div>
<div class="v" style="left:787px;top:585px;height:133px;background:#c70033"></div>
<div class="v" style="left:817px;top:585px;height:133px;background:#c70033"></div>
<div class="v" style="left:851px;top:585px;height:133px;background:#c70033"></div>
<div class="v" style="left:895px;top:585px;height:133px;background:#c70033"></div>
<div class="v" style="left:940px;top:615px;height:103px;background:#94006a"></div>
<div class="v" style="left:951px;top:585px;height:133px;background:#c70033"></div>
<div class="v" style="left:973px;top:595px;height:123px;background:#ba003e"></div>
<div class="v" style="left:1006px;top:585px;height:133px;background:#c70033"></div>
<div class="v" style="left:1028px;top:600px;height:118px;background:#b00048"></div>
<div class="v" style="left:1117px;top:610px;height:108px;background:#9c0060"></div>
<div class="v" style="left:1128px;top:585px;height:133px;background:#c70033"></div>
<div class="v" style="left:1139px;top:585px;height:133px;background:#c70033"></div>
<div class="v" style="left:1184px;top:585px;height:133px;background:#c70033"></div>
<div class="v" style="left:1206px;top:585px;height:133px;background:#c70033"></div>
<div class="v" style="left:1250px;top:585px;height:133px;background:#c70033"></div>
<div class="v" style="left:1306px;top:585px;height:133px;background:#c70033"></div>
<div class="v" style="left:1317px;top:602px;height:116px;background:#ac004d"></div>
<div class="v" style="left:1328px;top:593px;height:125px;background:#bc003c"></div>
<div class="v" style="left:1350px;top:602px;height:116px;background:#ac004d"></div>
<div class="v" style="left:1361px;top:594px;height:124px;background:#bb003d"></div>
<div class="v" style="left:1384px;top:604px;height:114px;background:#a80052"></div>
<div class="v" style="left:1395px;top:594px;height:124px;background:#bb003d"></div>
<div class="v" style="left:1417px;top:606px;height:112px;background:#a40058"></div>
<div class="v" style="left:1428px;top:594px;height:124px;background:#bb003d"></div>
<div class="v" style="left:1450px;top:607px;height:111px;background:#a2005a"></div>
<div class="v" style="left:1461px;top:597px;height:121px;background:#b60042"></div>
<div class="v" style="left:1484px;top:607px;height:111px;background:#a2005a"></div>
<div class="v" style="left:1495px;top:585px;height:133px;background:#c70033"></div>
<div class="v" style="left:1496px;top:604px;height:114px;background:#a80052"></div>
<div class="v" style="left:1539px;top:594px;height:124px;background:#bb003d"></div>
<div class="v" style="left:1584px;top:600px;height:118px;background:#b00048"></div>
<div style="left:1371px;top:110px;width:1px;height:608px;background:#f4f6f8;"></div>
<div style="left:1372px;top:110px;width:2px;height:608px;background:#363a3e;"></div>
<div style="left:1374px;top:110px;width:1px;height:608px;background:#f4f6f8;"></div>
<div style="left:221px;top:544px;width:1439px;height:1px;background:#a4a8ad;opacity:0"></div>
<div style="left:221px;top:718px;width:1363px;height:15px;background:linear-gradient(to bottom,#5a5c5e 0,#5a5c5e 1px,#b4b4b4 1px,#a0a0a0 8px,#8a8a8a 15px);"></div>
<div style="left:221px;top:718px;width:16px;height:15px;border:1px solid #5a5c5e;border-bottom:none;background:linear-gradient(to bottom,#c2c2c2,#a2a2a2);"><svg style="left:0px;top:0px" width="14" height="14" viewBox="0 0 14 14" ><path d="M9.200 2.500l-4.200 4.500 4.200 4.500" fill="none" stroke="#111" stroke-width="1.400"/></svg></div>
<div style="left:1565px;top:718px;width:16px;height:15px;border:1px solid #5a5c5e;border-bottom:none;background:linear-gradient(to bottom,#c2c2c2,#a2a2a2);"><svg style="left:0px;top:0px" width="14" height="14" viewBox="0 0 14 14" ><path d="M5 2.500l4.200 4.500-4.200 4.500" fill="none" stroke="#111" stroke-width="1.400"/></svg></div>
<div style="left:1581px;top:718px;width:3px;height:15px;background:#a8a8a8;border-top:1px solid #5a5c5e;"></div>
<div style="left:441px;top:718px;width:32px;height:15px;border:1px solid #15171a;border-bottom:none;border-radius:2px 2px 0 0;background:linear-gradient(to bottom,#3b3f44 0,#4c5157 40%,#6f757c 100%);"></div>
<div style="left:1584px;top:718px;width:76px;height:15px;background:linear-gradient(to bottom,#5a5c5e 0,#5a5c5e 1px,#b2b2b2 1px,#9a9a9a 100%);border-left:1px solid #5a5c5e;"><svg style="left:0px;top:0px" width="76" height="15" viewBox="0 0 76 15" ><path d="M4 7.500h4.500M68.500 7.500h4.500M70.750 5.200v4.600" stroke="#111" stroke-width="1"/>
<path d="M13 7.500h53" stroke="#2a2a2a" stroke-width="1"/>
<path d="M41 3l6.800 10.500h-13.600z" fill="#74787e" stroke="#1c1e20" stroke-width="1"/></svg></div>
<div style="left:1660px;top:718px;width:12px;height:15px;background:#f0f0f0;"><svg style="left:0px;top:0px" width="12" height="15" viewBox="0 0 12 15" ><g fill="#b8b8b8"><rect x="9" y="11" width="2" height="2"/><rect x="6" y="11" width="2" height="2"/><rect x="9" y="8" width="2" height="2"/><rect x="3" y="11" width="2" height="2"/><rect x="6" y="8" width="2" height="2"/><rect x="9" y="5" width="2" height="2"/></g></svg></div>
<div style="left:1660px;top:135px;width:12px;height:328px;background:linear-gradient(to right,#5a5c5e 0,#5a5c5e 1px,#a4a4a4 1px,#969696 100%);"></div>
<div style="left:1660px;top:135px;width:12px;height:16px;border-left:1px solid #5a5c5e;border-top:1px solid #5a5c5e;border-bottom:1px solid #5a5c5e;background:linear-gradient(to bottom,#bcbcbc,#a6a6a6);"><svg style="left:0px;top:0px" width="11" height="14" viewBox="0 0 11 14" ><path d="M1.500 9.500l4.200-4.200 4.200 4.200" fill="none" stroke="#111" stroke-width="1.400"/></svg></div>
<div style="left:1660px;top:448px;width:12px;height:16px;border-left:1px solid #5a5c5e;border-top:1px solid #5a5c5e;border-bottom:1px solid #5a5c5e;background:linear-gradient(to bottom,#bcbcbc,#a6a6a6);"><svg style="left:0px;top:0px" width="11" height="14" viewBox="0 0 11 14" ><path d="M1.500 4.800l4.200 4.200 4.200-4.200" fill="none" stroke="#111" stroke-width="1.400"/></svg></div>
<div style="left:1661px;top:260px;width:11px;height:63px;border:1px solid #15171a;border-right:none;border-radius:2px 0 0 2px;background:linear-gradient(to right,#3b3f44 0,#50555b 40%,#767c83 100%);"></div>
<div style="left:1660px;top:464px;width:12px;height:78px;border-left:1px solid #5a5c5e;border-bottom:1px solid #5a5c5e;background:linear-gradient(to right,#b0b0b0,#9c9c9c);"><svg style="left:0px;top:0px" width="11" height="77" viewBox="0 0 11 77" ><path d="M4 4.500h5M4 71.500h5M6.500 69v5" stroke="#111" stroke-width="1"/>
<path d="M6.500 10v56" stroke="#2a2a2a" stroke-width="1"/>
<defs><linearGradient id="tg" x1="0" y1="0" x2="1" y2="0"><stop offset="0" stop-color="#8a8e94"/><stop offset="1" stop-color="#3c4046"/></linearGradient></defs><path d="M1.500 45l10-8v16z" fill="url(#tg)" stroke="#1c1e20" stroke-width="1"/></svg></div>
<div style="left:1660px;top:542px;width:12px;height:6px;background:#9e9e9e;border-left:1px solid #5a5c5e;"></div>
<div style="left:1660px;top:548px;width:12px;height:170px;background:linear-gradient(to right,#5a5c5e 0,#5a5c5e 1px,#a4a4a4 1px,#969696 100%);"></div>
<div style="left:1660px;top:548px;width:12px;height:16px;border-left:1px solid #5a5c5e;border-top:1px solid #5a5c5e;border-bottom:1px solid #5a5c5e;background:linear-gradient(to bottom,#bcbcbc,#a6a6a6);"><svg style="left:0px;top:0px" width="11" height="14" viewBox="0 0 11 14" ><path d="M1.500 9.500l4.200-4.200 4.200 4.200" fill="none" stroke="#111" stroke-width="1.400"/></svg></div>
<div style="left:1660px;top:702px;width:12px;height:16px;border-left:1px solid #5a5c5e;border-top:1px solid #5a5c5e;border-bottom:1px solid #5a5c5e;background:linear-gradient(to bottom,#bcbcbc,#a6a6a6);"><svg style="left:0px;top:0px" width="11" height="14" viewBox="0 0 11 14" ><path d="M1.500 4.800l4.200 4.200 4.200-4.200" fill="none" stroke="#111" stroke-width="1.400"/></svg></div>
<div style="left:1661px;top:116px;width:11px;height:13px;border-radius:2px 0 0 2px;background:#5b5f65;"><svg style="left:0px;top:0px" width="11" height="13" viewBox="0 0 11 13" ><path d="M1.800 4.500h8l-4 4.500z" fill="#0c0c0c"/></svg></div>
<svg style="left:171px;top:717px" width="50" height="15" viewBox="0 0 50 15" ><path d="M8 3.500h3.600v2.800h2.800v3.600h-2.800v2.800h-3.600v-2.800h-2.800v-3.600h2.800z" fill="none" stroke="#111" stroke-width="1.200"/>
<path d="M33.500 3.500h9l3.500 3.200v6.300h-12.500z" fill="none" stroke="#111" stroke-width="1.200"/><path d="M42.500 3.500v3.200h3.500" fill="none" stroke="#111" stroke-width="1"/></svg>
</body></html>
